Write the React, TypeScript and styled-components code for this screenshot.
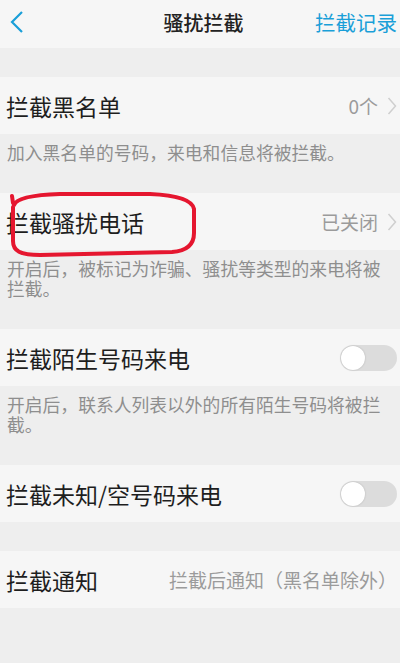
import React from "react";
import styled, { createGlobalStyle } from "styled-components";

const Global = createGlobalStyle`
  html, body { margin: 0; padding: 0; background: #eeeeee; }
  body { font-family: "Noto Sans CJK SC", "Noto Sans", sans-serif; }
  * { box-sizing: border-box; }
`;

const Page = styled.div`
  min-height: 100vh;
  background: #eeeeee;
  display: flex;
  flex-direction: column;
`;

const Header = styled.header`
  height: 48px;
  background: #f6f6f6;
  display: grid;
  grid-template-columns: 1fr auto 1fr;
  align-items: center;
  padding: 0 3px 4px 10px;
`;

const Back = styled.div`
  display: flex;
  align-items: center;
`;

const Title = styled.div`
  font-size: 20px;
  font-weight: 500;
  color: #222;
  letter-spacing: 0;
`;

const Action = styled.div`
  justify-self: end;
  font-size: 20.5px;
  color: #1a9fd8;
`;

const Gap = styled.div<{ $h: number }>`
  height: ${(p) => p.$h}px;
`;

const Row = styled.div`
  position: relative;
  height: 57px;
  background: #f6f6f6;
  display: flex;
  align-items: center;
  justify-content: space-between;
  padding: 0 3px 0 6px;
`;

const Label = styled.div`
  font-size: 23px;
  color: #1e1e1e;
  white-space: nowrap;
`;

const Value = styled.div`
  display: flex;
  align-items: center;
  gap: 9px;
  font-size: 19px;
  color: #9b9b9b;
  white-space: nowrap;
`;

const Desc = styled.div`
  padding: 8px 12px 31px 7px;
  font-size: 17.8px;
  line-height: 20px;
  color: #8e8e8e;
`;

const Track = styled.div<{ $on?: boolean }>`
  width: 57px;
  height: 26px;
  border-radius: 13px;
  background: ${(p) => (p.$on ? "#1a9fd8" : "#dcdcdc")};
  display: flex;
  align-items: center;
  padding: 0 1px;
  justify-content: ${(p) => (p.$on ? "flex-end" : "flex-start")};
`;

const Thumb = styled.div`
  width: 24px;
  height: 24px;
  border-radius: 50%;
  background: #ffffff;
  box-shadow: 0 0 2px rgba(0, 0, 0, 0.2);
`;

const Mark = styled.svg`
  position: absolute;
  left: 0;
  top: 0;
  overflow: visible;
  pointer-events: none;
`;

const Chevron = () => (
  <svg width="10" height="18" viewBox="0 0 10 18">
    <path d="M1.5 1 L8.5 9 L1.5 17" fill="none" stroke="#cfcfcf" strokeWidth="1.5" />
  </svg>
);

const Switch = ({ on }: { on?: boolean }) => (
  <Track $on={on}>
    <Thumb />
  </Track>
);

export default function App() {
  return (
    <Page>
      <Global />
      <Header>
        <Back>
          <svg width="14" height="22" viewBox="0 0 14 22">
            <path d="M12 1 L2 11 L12 21" fill="none" stroke="#1a9fd8" strokeWidth="2.2" />
          </svg>
        </Back>
        <Title>骚扰拦截</Title>
        <Action>拦截记录</Action>
      </Header>
      <Gap $h={29} />
      <Row>
        <Label>拦截黑名单</Label>
        <Value>
          0个
          <Chevron />
        </Value>
      </Row>
      <Desc>加入黑名单的号码，来电和信息将被拦截。</Desc>
      <Row>
        <Label>拦截骚扰电话</Label>
        <Value>
          已关闭
          <Chevron />
        </Value>
        <Mark width="200" height="64">
          <path
            d="M12 3 L13 10 M14 12 C16 6 30 2 60 1 L150 1 C175 2 192 6 194 16 L194 40 C194 52 186 58 172 59 L40 62 C20 62 13 58 13 48 L13 14"
            fill="none"
            stroke="#e5162f"
            strokeWidth="4"
            strokeLinecap="round"
            strokeLinejoin="round"
          />
        </Mark>
      </Row>
      <Desc>开启后，被标记为诈骗、骚扰等类型的来电将被拦截。</Desc>
      <Row>
        <Label>拦截陌生号码来电</Label>
        <Switch />
      </Row>
      <Desc>开启后，联系人列表以外的所有陌生号码将被拦截。</Desc>
      <Row>
        <Label>拦截未知/空号码来电</Label>
        <Switch />
      </Row>
      <Gap $h={29} />
      <Row>
        <Label>拦截通知</Label>
        <Value>拦截后通知（黑名单除外）</Value>
      </Row>
    </Page>
  );
}
